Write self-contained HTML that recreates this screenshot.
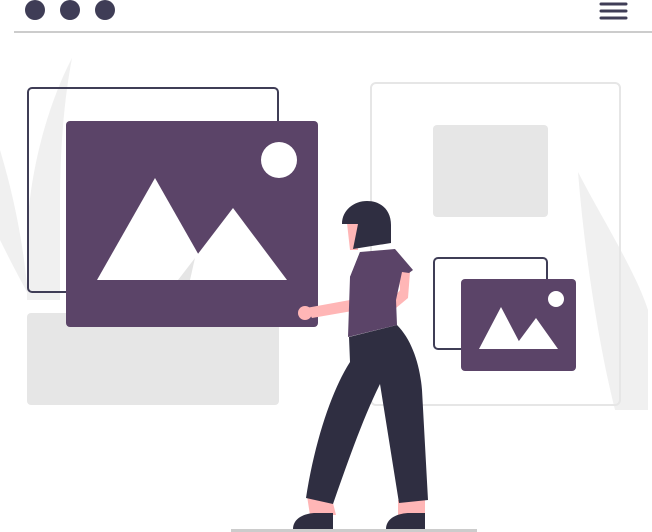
<!DOCTYPE html>
<html><head><meta charset="utf-8"><style>html,body{margin:0;padding:0;background:#fff}svg{display:block}</style></head>
<body>
<svg width="652" height="532" viewBox="0 0 652 532" xmlns="http://www.w3.org/2000/svg">
<!-- leaves -->
<path d="M72,58 C45,110 28,180 27,240 L27,300 L60,300 L60,200 C60,150 64,100 72,58 Z" fill="#f0f0f0"/>
<path d="M0,150 C12,190 22,235 27,285 L27,292 C15,270 5,250 0,240 Z" fill="#f0f0f0"/>
<path d="M578,172 C600,215 635,270 648,310 L648,410 L615,410 C600,350 585,260 578,172 Z" fill="#f0f0f0"/>
<!-- header -->
<circle cx="35" cy="10" r="10" fill="#3f3d56"/>
<circle cx="70" cy="10" r="10" fill="#3f3d56"/>
<circle cx="105" cy="10" r="10" fill="#3f3d56"/>
<g stroke="#3f3d56" stroke-width="3" stroke-linecap="round"><line x1="601" y1="4" x2="626" y2="4"/><line x1="601" y1="11" x2="626" y2="11"/><line x1="601" y1="18" x2="626" y2="18"/></g>
<rect x="14" y="31" width="638" height="2" fill="#cccccc"/>
<!-- left images -->
<rect x="28" y="88" width="250" height="204" rx="4" fill="none" stroke="#3f3d56" stroke-width="2"/>
<rect x="27" y="313" width="252" height="92" rx="4" fill="#e6e6e6"/>
<rect x="66" y="121" width="252" height="206" rx="4" fill="#5b4468"/>
<circle cx="279" cy="160" r="18" fill="#fff"/>
<path d="M97,280 L155,178 L213,280 Z" fill="#fff"/>
<path d="M178,280 L233,208 L287,280 Z" fill="#fff"/>
<path d="M178,280 L195,258 L190,280 Z" fill="#ccc" opacity=".5"/>
<!-- right -->
<rect x="371" y="83" width="249" height="322" rx="5" fill="none" stroke="#e6e6e6" stroke-width="2"/>
<rect x="433" y="125" width="115" height="92" rx="4" fill="#e6e6e6"/>
<rect x="434" y="258" width="113" height="91" rx="4" fill="#fff" stroke="#3f3d56" stroke-width="2"/>
<rect x="461" y="279" width="115" height="92" rx="4" fill="#5b4468"/>
<circle cx="556" cy="299" r="8" fill="#fff"/>
<path d="M479,349 L501,307 L523,349 Z" fill="#fff"/>
<path d="M513,349 L536,318 L558,349 Z" fill="#fff"/>
<!-- floor -->
<rect x="231" y="529" width="246" height="3" fill="#cccccc"/>
<!-- person -->
<path d="M307,496 L333,503 L336,515 L310,515 Z" fill="#ffb6b6"/>
<path d="M398,500 L425,500 L425,515 L398,515 Z" fill="#ffb6b6"/>
<path d="M349,337 L397,325 C412,340 420,365 422,390 L428,500 L399,503 L380,384 C362,420 345,470 333,504 L306,498 C315,440 332,390 350,362 Z" fill="#2f2e41"/>
<path d="M293,529 C293,518 305,513 316,513 L333,513 L333,529 Z" fill="#2f2e41"/>
<path d="M386,529 C386,518 398,513 410,513 L425,513 L425,529 Z" fill="#2f2e41"/>
<path d="M347,223 L358,222 L358,250 L350,250 Z" fill="#ffb6b6"/>
<path d="M362,283 L370,287 L358,310 L312,318 L306,308 L350,300 Z" fill="#ffb6b6"/>
<circle cx="305" cy="313" r="7" fill="#ffb6b6"/>
<path d="M399,268 L410,272 L408,298 L396,308 L392,300 L400,290 Z" fill="#ffb6b6"/>
<path d="M360,252 L395,249 L413,270 L409,273 L402,272 L396,300 L397,325 L348,337 L350,277 Z" fill="#5b4468"/>
<path d="M360,252 L350,277 L352,295 L370,287 Z" fill="#5b4468"/>
<path d="M342,224 C342,210 354,201 367,201 C382,201 391,211 391,225 L391,243 L353,249 L358,224 Z" fill="#2f2e41"/>
</svg>
</body></html>
